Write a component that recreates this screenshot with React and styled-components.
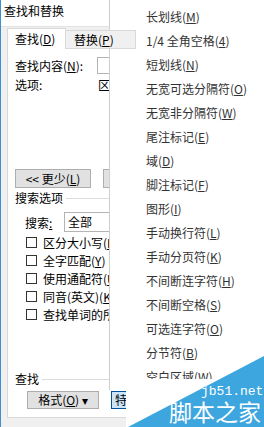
import React from 'react';
import styled, { createGlobalStyle } from 'styled-components';

const GlobalStyle = createGlobalStyle`
  html, body { margin: 0; padding: 0; background: #fff; }
  body {
    font-family: "Noto Sans CJK SC", "Noto Sans", sans-serif;
    font-size: 12px;
    color: #000;
  }
`;

const Screen = styled.div`
  position: relative;
  width: 264px;
  height: 427px;
  overflow: hidden;
  background: #f0f0f0;
`;

const Dialog = styled.div`
  width: 420px;
  height: 427px;
  border-left: 1px solid #3d8fd4;
  display: flex;
  flex-direction: column;
  background: #f0f0f0;
`;

const TitleBar = styled.div`
  height: 27px;
  box-sizing: border-box;
  background: #fff;
  border-bottom: 1px solid #e2e2e2;
  padding-left: 3px;
  line-height: 21px;
  font-size: 12px;
`;

const Body = styled.div`
  padding: 1px 0 0 6px;
  display: flex;
  flex-direction: column;
`;

const TabStrip = styled.div`
  display: flex;
  align-items: flex-end;
  height: 21px;
  position: relative;
  z-index: 1;
`;

const Tab = styled.div`
  box-sizing: border-box;
  height: ${p => (p.$active ? '21px' : '19px')};
  padding-left: ${p => (p.$active ? '7px' : '8px')};
  width: ${p => (p.$active ? '59px' : '70px')};
  background: ${p => (p.$active ? '#fff' : '#f0f0f0')};
  border: 1px solid #d9d9d9;
  border-bottom: ${p => (p.$active ? 'none' : '1px solid #d9d9d9')};
  border-left: ${p => (p.$active ? '1px solid #d9d9d9' : 'none')};
  line-height: ${p => (p.$active ? '20px' : '17px')};
  white-space: nowrap;
`;

const Panel = styled.div`
  box-sizing: border-box;
  height: 370px;
  margin-top: -1px;
  background: #fff;
  border: 1px solid #d9d9d9;
  padding-left: 7px;
  display: flex;
  flex-direction: column;
`;

const FieldRow = styled.div`
  display: flex;
  align-items: center;
  height: ${p => p.$h || 13}px;
  margin-top: ${p => p.$mt || 0}px;
  padding-left: ${p => p.$pl || 0}px;
  line-height: 13px;
  white-space: nowrap;
`;

const FieldLabel = styled.span`
  width: ${p => p.$w}px;
  flex: none;
`;

const TextBox = styled.div`
  box-sizing: border-box;
  width: ${p => p.$w || 200}px;
  height: ${p => p.$h || 17}px;
  border: 1px solid #b4b4b4;
  background: #fff;
  padding-left: 3px;
  line-height: ${p => (p.$h || 17) - 2}px;
  flex: none;
`;

const ButtonRow = styled.div`
  display: flex;
  gap: 12px;
  margin-top: ${p => p.$mt}px;
  padding-left: ${p => p.$pl || 0}px;
`;

const Button = styled.div`
  box-sizing: border-box;
  width: ${p => p.$w}px;
  height: ${p => p.$h || 19}px;
  flex: none;
  background: ${p => (p.$focus ? '#cce4f7' : '#e1e1e1')};
  border: 1px solid ${p => (p.$focus ? '#005499' : '#adadad')};
  padding-left: ${p => p.$pl || 0}px;
  text-align: ${p => (p.$pl ? 'left' : 'center')};
  line-height: ${p => (p.$h || 19) - 2}px;
  white-space: nowrap;
  overflow: hidden;
`;

const GroupHeader = styled.div`
  display: flex;
  align-items: center;
  gap: 3px;
  height: 14px;
  margin-top: ${p => p.$mt}px;
  line-height: 14px;
  white-space: nowrap;

  &::after {
    content: '';
    flex: 1;
    height: 1px;
    background: #dcdcdc;
  }
`;

const CheckList = styled.div`
  margin-top: 1px;
  padding-left: 11px;
  display: flex;
  flex-direction: column;
`;

const CheckRow = styled.div`
  display: flex;
  align-items: center;
  height: 18px;
  gap: 6px;
  white-space: nowrap;
`;

const Box = styled.span`
  box-sizing: border-box;
  width: 11px;
  height: 11px;
  border: 1px solid #333;
  background: #fff;
  flex: none;
`;

const Menu = styled.div`
  position: absolute;
  left: 109px;
  top: 0;
  width: 155px;
  height: 390px;
  box-sizing: border-box;
  background: #fff;
  border-left: 1px solid #cfcfcf;
  padding-top: 5px;
  overflow: hidden;
`;

const MenuItem = styled.div`
  height: 24px;
  line-height: 24px;
  padding-left: 36px;
  color: #333;
  font-size: 12px;
  white-space: nowrap;
`;

const Watermark = styled.div`
  position: absolute;
  left: 120px;
  top: 350px;
  width: 144px;
  height: 77px;
`;

const Domain = styled.span`
  position: absolute;
  left: 81px;
  top: 34px;
  font-family: "Liberation Mono", "DejaVu Sans Mono", monospace;
  font-size: 13px;
  line-height: 16px;
  color: #fff;
  text-shadow: 0 0 1px #3ea6df, 0 0 1px #3ea6df;
`;

const Brand = styled.span`
  position: absolute;
  left: 49px;
  top: 50px;
  font-size: 23px;
  line-height: 23px;
  color: #fff;
  white-space: nowrap;
`;

const menuItems = [
  ['长划线(', 'M', ')'],
  ['1/4 全角空格(', '4', ')'],
  ['短划线(', 'N', ')'],
  ['无宽可选分隔符(', 'O', ')'],
  ['无宽非分隔符(', 'W', ')'],
  ['尾注标记(', 'E', ')'],
  ['域(', 'D', ')'],
  ['脚注标记(', 'F', ')'],
  ['图形(', 'I', ')'],
  ['手动换行符(', 'L', ')'],
  ['手动分页符(', 'K', ')'],
  ['不间断连字符(', 'H', ')'],
  ['不间断空格(', 'S', ')'],
  ['可选连字符(', 'O', ')'],
  ['分节符(', 'B', ')'],
  ['空白区域(', 'W', ')'],
];

const checks = [
  ['区分大小写(', 'H', ')'],
  ['全字匹配(', 'Y', ')'],
  ['使用通配符(', 'U', ')'],
  ['同音(英文)(', 'K', ')'],
  ['查找单词的所有形式(英文)(', 'W', ')'],
];

export default function App() {
  return (
    <>
      <GlobalStyle />
      <Screen>
        <Dialog>
          <TitleBar>查找和替换</TitleBar>
          <Body>
            <TabStrip>
              <Tab $active>查找(<u>D</u>)</Tab>
              <Tab>替换(<u>P</u>)</Tab>
            </TabStrip>
            <Panel>
              <FieldRow $mt={8} $h={17}>
                <FieldLabel $w={82}>查找内容(<u>N</u>):</FieldLabel>
                <TextBox $w={250} />
              </FieldRow>
              <FieldRow $mt={4}>
                <FieldLabel $w={83}>选项:</FieldLabel>
                <span>区分全/半角</span>
              </FieldRow>
              <ButtonRow $mt={78}>
                <Button $w={76}>&lt;&lt; 更少(<u>L</u>)</Button>
                <Button $w={130}>阅读突出显示(<u>R</u>) ▾</Button>
              </ButtonRow>
              <GroupHeader $mt={3}>搜索选项</GroupHeader>
              <FieldRow $mt={7} $h={20} $pl={10}>
                <FieldLabel $w={39}>搜索<u>:</u></FieldLabel>
                <TextBox $w={100} $h={20}>全部</TextBox>
              </FieldRow>
              <CheckList>
                {checks.map(([a, k, b]) => (
                  <CheckRow key={a}>
                    <Box />
                    <span>{a}<u>{k}</u>{b}</span>
                  </CheckRow>
                ))}
              </CheckList>
              <GroupHeader $mt={49}>查找</GroupHeader>
              <ButtonRow $mt={5} $pl={12}>
                <Button $w={72} $h={18}>格式(<u>O</u>) ▾</Button>
                <Button $w={90} $h={18} $focus $pl={3}>特殊格式(<u>E</u>) ▾</Button>
              </ButtonRow>
            </Panel>
          </Body>
        </Dialog>

        <Menu>
          {menuItems.map(([a, k, b], i) => (
            <MenuItem key={i}>{a}<u>{k}</u>{b}</MenuItem>
          ))}
        </Menu>

        <Watermark>
          <svg width="144" height="77" viewBox="0 0 144 77">
            <polygon points="6,29 144,29 144,77 6,77" fill="#fff" />
            <polygon points="8,77 144,6 144,77" fill="#3ea6df" />
          </svg>
          <Domain>jb51.net</Domain>
          <Brand>脚本之家</Brand>
        </Watermark>
      </Screen>
    </>
  );
}
